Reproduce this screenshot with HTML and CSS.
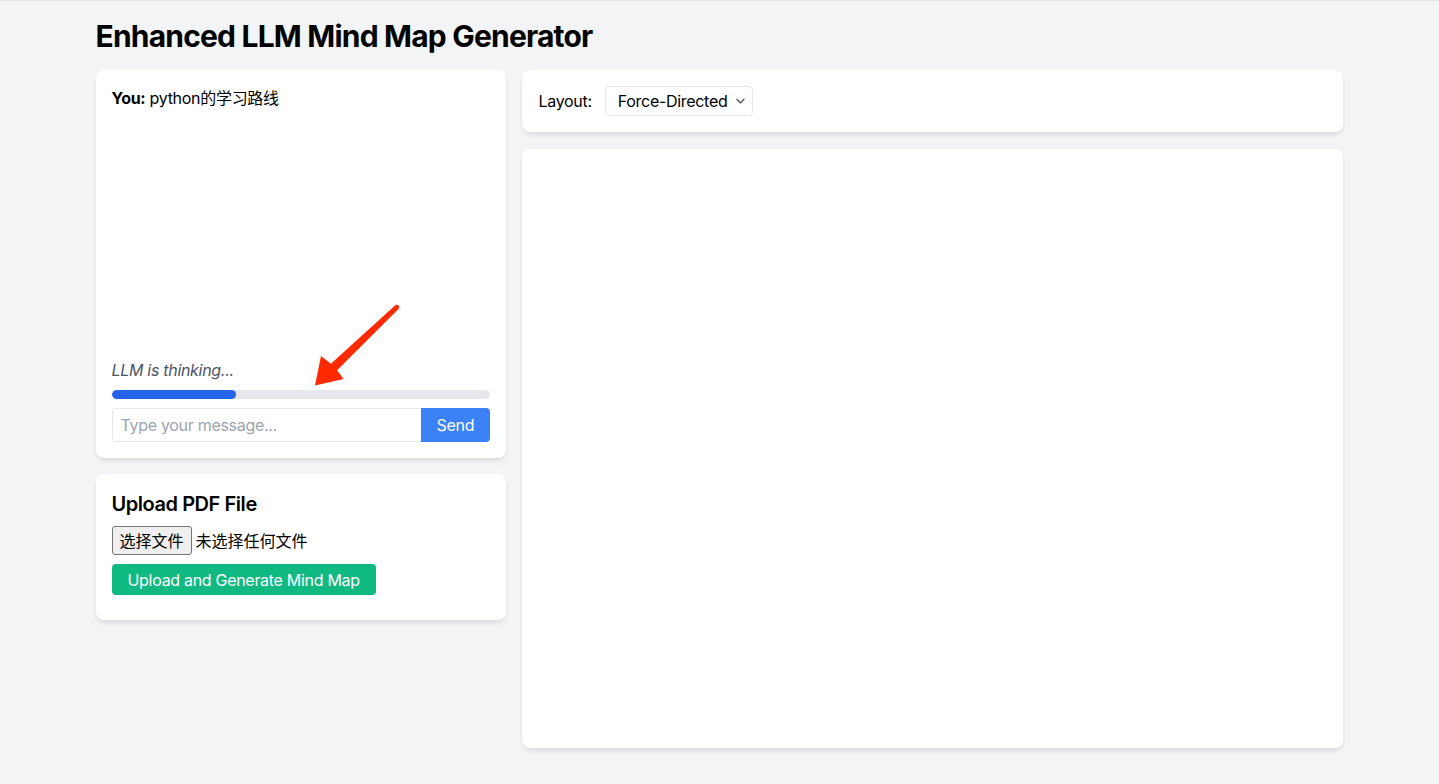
FILE: index.html
```html
<!DOCTYPE html>
<html lang="zh-CN">
<head>
<meta charset="utf-8">
<title>Enhanced LLM Mind Map Generator</title>
<link rel="stylesheet" href="styles.css">
</head>
<body>
<div class="container">
  <h1 class="title">Enhanced LLM Mind Map Generator</h1>
  <div class="grid">
    <div class="left-col">
      <div class="card chat-card">
        <div class="messages">
          <div class="msg"><strong>You:</strong> python的学习路线</div>
        </div>
        <div class="thinking">LLM is thinking...</div>
        <div class="progress"><div class="progress-fill" style="width:33%"></div></div>
        <div class="input-row">
          <input class="msg-input" type="text" placeholder="Type your message...">
          <button class="send-btn">Send</button>
        </div>
        <svg class="arrow" viewBox="96 70 410 388" width="410" height="388" aria-hidden="true">
          <path d="M395.3 305.2 L330.9 363.7 L321 356 L315 385.5 L343.5 379 L337.1 370.3 L398.7 308.8 A2.5 2.5 0 0 0 395.3 305.2 Z" fill="#ff2a00"/>
        </svg>
      </div>
      <div class="card upload-card">
        <h2 class="upload-title">Upload PDF File</h2>
        <div class="file-row">
          <span class="file-btn">选择文件</span>
          <span class="file-name">未选择任何文件</span>
        </div>
        <button class="upload-btn">Upload and Generate Mind Map</button>
      </div>
    </div>
    <div class="right-col">
      <div class="card layout-card">
        <label class="layout-label">Layout:</label>
        <div class="select-wrap">
          <select class="layout-select">
            <option>Force-Directed</option>
            <option>Tree</option>
            <option>Radial</option>
          </select>
          <svg class="chev" viewBox="0 0 10 6" width="9" height="6" aria-hidden="true"><path d="M1 1 L5 5 L9 1" fill="none" stroke="#333" stroke-width="1.3" stroke-linecap="round" stroke-linejoin="round"/></svg>
        </div>
      </div>
      <div class="card map-card"></div>
    </div>
  </div>
</div>
</body>
</html>
```
FILE: styles.css
```css
* { box-sizing: border-box; }
html, body { margin: 0; padding: 0; }
body {
  background: #f3f4f6;
  border-top: 1px solid #e3e4e6;
  font-family: Inter, "Noto Sans CJK SC", "Liberation Sans", sans-serif;
  font-size: 16px;
  line-height: 24px;
  letter-spacing: -0.3px;
  color: #000;
  min-height: 784px;
}
.container {
  max-width: 1280px;
  margin: 0 auto;
  padding: 17px 16px 16px;
}
.title {
  margin: 0 0 16px;
  font-size: 30px;
  line-height: 36px;
  font-weight: 700;
  letter-spacing: -0.8px;
}
.grid {
  display: grid;
  grid-template-columns: 410px 821px;
  gap: 16px;
}
.left-col {
  display: flex;
  flex-direction: column;
  gap: 16px;
}
.right-col {
  display: flex;
  flex-direction: column;
  gap: 17px;
}
.card {
  background: #fff;
  border-radius: 8px;
  box-shadow: 0 4px 6px -1px rgba(0,0,0,0.08), 0 2px 4px -2px rgba(0,0,0,0.08);
  padding: 16px;
}
.chat-card { position: relative; }
.messages { height: 256px; margin-bottom: 16px; }
.msg strong { font-weight: 700; }
.thinking {
  font-style: italic;
  color: #4b5563;
  margin-bottom: 8px;
}
.progress {
  height: 9px;
  background: #e5e7eb;
  border-radius: 9999px;
  margin-bottom: 9px;
  overflow: hidden;
}
.progress-fill {
  height: 100%;
  background: #2563eb;
  border-radius: 9999px;
}
.input-row { display: flex; }
.msg-input {
  flex: 1;
  min-width: 0;
  height: 34px;
  border: 1px solid #e5e7eb;
  border-right: none;
  border-radius: 4px 0 0 4px;
  padding: 4px 8px;
  font: inherit;
  letter-spacing: inherit;
  color: #000;
  outline: none;
}
.msg-input::placeholder { color: #9ca3af; }
.send-btn {
  height: 34px;
  width: 69px;
  border: none;
  background: #3b82f6;
  color: #fff;
  border-radius: 0 4px 4px 0;
  font: inherit;
  letter-spacing: inherit;
  padding: 4px 16px;
}
.arrow {
  position: absolute;
  left: 0;
  top: 0;
  pointer-events: none;
}
.upload-card { padding-bottom: 25px; }
.upload-title {
  margin: 0 0 8px;
  font-size: 20px;
  line-height: 28px;
  font-weight: 600;
  letter-spacing: -0.45px;
}
.file-row {
  display: flex;
  align-items: center;
  gap: 4px;
  margin-bottom: 9px;
  height: 29px;
}
.file-btn {
  display: inline-flex;
  align-items: center;
  justify-content: center;
  width: 80px;
  height: 29px;
  background: #efefef;
  border: 1px solid #767676;
  border-radius: 3px;
  color: #000;
  letter-spacing: 0;
}
.file-name { color: #000; letter-spacing: 0; }
.upload-btn {
  display: block;
  height: 31px;
  padding: 3px 16px;
  border: none;
  border-radius: 4px;
  background: #10b981;
  color: #fff;
  font: inherit;
  letter-spacing: inherit;
}
.layout-card {
  display: flex;
  align-items: center;
  height: 62px;
  padding-left: 17px;
}
.layout-label { margin-right: 13px; }
.select-wrap { position: relative; }
.layout-select {
  appearance: none;
  -webkit-appearance: none;
  width: 148px;
  height: 30px;
  padding: 0 18px 0 12px;
  border: 1px solid #e5e7eb;
  border-radius: 4px;
  background: #fff;
  font: inherit;
  letter-spacing: inherit;
  color: #000;
}
.chev {
  position: absolute;
  right: 8px;
  top: 12px;
  pointer-events: none;
}
.map-card { height: 599px; }
```
